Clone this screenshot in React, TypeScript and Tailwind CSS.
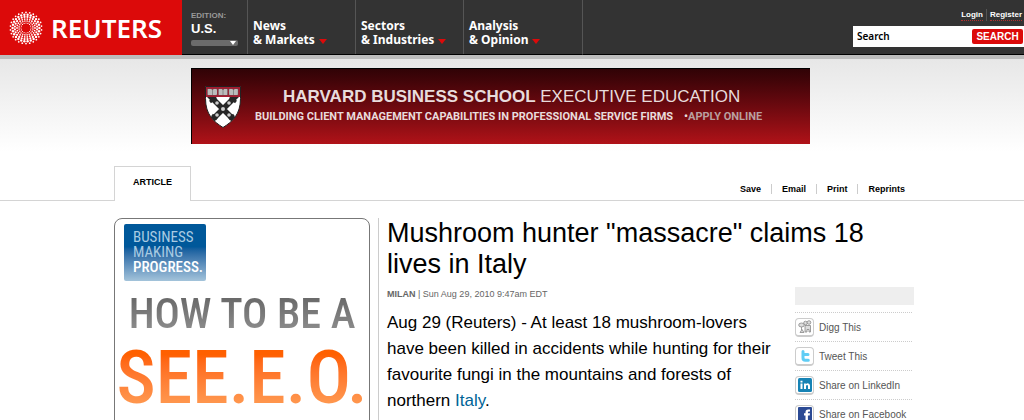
import { Fragment } from 'react';
import type { ReactNode } from 'react';

const NAV_ITEMS = [
  { top: 'News', bottom: '& Markets', width: 'w-[108px]' },
  { top: 'Sectors', bottom: '& Industries', width: 'w-[108px]' },
  { top: 'Analysis', bottom: '& Opinion', width: 'w-[119px]' },
];

const TOOLS = ['Save', 'Email', 'Print', 'Reprints'];

// Rings of the logo: radius, dot size, dot count
const RINGS = [
  [5, 0.6, 16],
  [7, 0.8, 20],
  [9, 0.9, 22],
  [11.2, 1.1, 24],
  [13.4, 1.2, 26],
  [15.6, 0.9, 26],
];

function ReutersMark() {
  return (
    <svg viewBox="-17 -17 34 34" className="size-[34px] shrink-0" fill="white" aria-hidden="true">
      {RINGS.map(([radius, size, count], ring) =>
        Array.from({ length: count }, (_, i) => {
          const angle = ((i + (ring % 2) / 2) / count) * Math.PI * 2;
          return <circle key={`${ring}-${i}`} cx={Math.cos(angle) * radius} cy={Math.sin(angle) * radius} r={size} />;
        }),
      )}
    </svg>
  );
}

function Header() {
  return (
    <header className="flex h-[59px] border-b-4 border-[#bdbdbd] bg-[#333] text-white">
      <a href="#home" className="flex w-[182px] shrink-0 items-center gap-2 bg-[#dc0a0a] pl-[9px]">
        <ReutersMark />
        <span className="font-['Noto_Sans','Open_Sans',sans-serif] text-[26px] leading-8 font-semibold">REUTERS</span>
      </a>
      <div className="w-[65px] shrink-0 border-b border-black pt-[11px] pl-[9px]">
        <div className="text-[8px] leading-[10px] font-bold text-[#999]">EDITION:</div>
        <div className="text-[13px] leading-4 font-bold">U.S.</div>
        <button type="button" aria-label="Change edition" className="mt-[3px] flex h-[6px] w-[47px] items-center justify-end rounded-xs bg-[#6b6b6b] pr-[2px]">
          <svg viewBox="0 0 6 4" className="h-1 w-[6px]" fill="white"><path d="M0 0h6L3 4z" /></svg>
        </button>
      </div>
      <nav className="flex shrink-0 border-r border-b border-r-[#555] border-b-black font-['Noto_Sans','Open_Sans',sans-serif] text-xs font-bold">
        {NAV_ITEMS.map((item) => (
          <a key={item.top} href="#section" className={`${item.width} border-l border-[#555] pt-[19px] pl-[5px] leading-[14px]`}>
            <span className="block">{item.top}</span>
            <span className="flex items-center gap-1 whitespace-nowrap">
              {item.bottom}
              <svg viewBox="0 0 8 5" className="mt-[2px] h-[5px] w-2" fill="#dc0a0a"><path d="M0 0h8L4 5z" /></svg>
            </span>
          </a>
        ))}
      </nav>
      <div className="flex flex-1 flex-col items-end border-b border-black pt-[9px]">
        <div className="flex pr-[2px] text-[8px] leading-[11px] font-bold">
          <a href="#login" className="border-b border-dotted border-[#b03030]">Login</a>
          <span className="mx-[3px] border-l border-[#555]" />
          <a href="#register" className="border-b border-dotted border-[#b03030]">Register</a>
        </div>
        <form className="mt-[5px] flex h-[21px] w-[171px] items-center bg-white pr-px">
          <input aria-label="Search" defaultValue="Search" className="w-0 flex-1 pl-1 font-['Noto_Sans','Open_Sans',sans-serif] text-[10px] font-semibold text-black outline-none" />
          <button type="button" className="h-[15px] w-[51px] rounded-xs bg-[#dc0a0a] text-[10px] leading-[15px] font-bold">SEARCH</button>
        </form>
      </div>
    </header>
  );
}

function Shield() {
  return (
    <svg viewBox="0 0 36 42" className="h-[42px] w-9 shrink-0" aria-hidden="true">
      <clipPath id="shield">
        <path d="M.5.5h35v12c0 16-8 23-17.500 29C8.500 35.500.5 28.500.5 12.500z" />
      </clipPath>
      <g clipPath="url(#shield)">
        <path d="M0 0h36v42H0z" fill="#fff" />
        <path d="M4 9l28 28M32 9L4 37" stroke="#262626" strokeWidth="5.500" />
        <path d="M5 16l6-5M31 16l-6-5M7 29l5 4M29 29l-5 4" stroke="#262626" strokeWidth="3" />
        <path d="M0 0h36v11H0z" fill="#a51c30" />
      </g>
      <g fill="#ddd" stroke="#555" strokeWidth=".5">
        <path d="M2.500 3h4l1 1 1-1h3.500v6H2.500zM13.500 3h3.500l1 1 1-1h3.500v6h-9zM24 3h3.500l1 1 1-1H33v6h-9z" />
        <path d="M3 5h8M3 7h8M14 5h8M14 7h8M24.500 5h8M24.500 7h8M7.500 4v5M18 4v5M28.500 4v5" />
      </g>
      <g fill="#ccc">
        <circle cx="18" cy="23" r="2" />
        <circle cx="12" cy="17" r="1.800" />
        <circle cx="24" cy="17" r="1.800" />
        <circle cx="12" cy="29" r="1.800" />
        <circle cx="24" cy="29" r="1.800" />
      </g>
      <path d="M.5.5h35v12c0 16-8 23-17.500 29C8.500 35.500.5 28.500.5 12.500z" fill="none" stroke="#222" />
    </svg>
  );
}

function Banner() {
  return (
    <a href="#harvard" className="flex h-[76px] w-full max-w-[619px] border-t border-l border-black bg-linear-to-b from-[#300306] to-[#b01218] pt-[17px] pl-[13px] whitespace-nowrap text-[#e8dcdc]">
      <Shield />
      <div className="flex flex-col pl-[14px]">
        <span className="pl-7 text-[17px] leading-[22px]">
          <b className="font-bold">HARVARD BUSINESS SCHOOL</b> EXECUTIVE EDUCATION
        </span>
        <span className="flex items-center gap-[11px] font-['Roboto','Liberation_Sans',sans-serif] text-[11px] leading-[18px] font-bold">
          BUILDING CLIENT MANAGEMENT CAPABILITIES IN PROFESSIONAL SERVICE FIRMS
          <span className="text-[#b9a0a0]"><span className="text-[#e8dcdc]">•</span>APPLY ONLINE</span>
        </span>
      </div>
    </a>
  );
}

function Ad() {
  return (
    <aside className="h-[260px] w-[256px] shrink-0 overflow-hidden rounded-t-lg border border-[#777] font-['Roboto_Condensed','Liberation_Sans_Narrow','DejaVu_Sans_Condensed',sans-serif] whitespace-nowrap">
      <div className="mt-[5px] ml-[9px] h-[57px] w-[82px] rounded-xs bg-linear-to-b from-[#00589a] from-40% to-[#a3c3da] pt-[6px] pl-[9px] text-[15px] leading-[15px] text-[#a9cbe2]">
        <div>BUSINESS</div>
        <div>MAKING</div>
        <div className="font-medium text-white">PROGRESS.</div>
      </div>
      <div className="mt-2 bg-linear-to-b from-[#606060] to-[#969696] bg-clip-text text-center text-[42px] leading-[50px] font-medium text-transparent">HOW TO BE A</div>
      <div className="bg-linear-to-b from-[#ff6000] from-20% to-[#ff954c] to-80% bg-clip-text text-center text-[74px] leading-[78px] font-medium text-transparent">SEE.E.O.</div>
    </aside>
  );
}

function DiggIcon() {
  return (
    <svg viewBox="0 0 14 14" className="size-[14px]" fill="#ddd" stroke="#888" strokeWidth=".8">
      <ellipse cx="3.500" cy="5" rx="2.800" ry="2" />
      <path d="M3.500 7v3M2 12.500l2-3 2 3zM7 5.500h5.500V12H11V9.500H9V12H7z" />
      <circle cx="7.500" cy="3" r="1.800" />
      <circle cx="11" cy="2.500" r="1.800" />
    </svg>
  );
}

function TwitterIcon() {
  return (
    <svg viewBox="0 0 14 14" className="size-[14px]" fill="none" stroke="#5fcdf5" strokeWidth="3" strokeLinecap="round" strokeLinejoin="round">
      <path d="M5 2.500v6.500q0 2.300 2.300 2.300h3M5 5.500h5" />
    </svg>
  );
}

function LinkedInIcon() {
  return (
    <svg viewBox="0 0 14 14" className="size-[14px]">
      <rect width="14" height="14" rx="1.500" fill="#1683b5" />
      <path d="M2.500 5.500h2V11h-2zM2.500 2.700h2v1.800h-2zM6 5.500h1.900v.8q.6-1 1.900-1 2.200 0 2.200 2.500V11h-2V8q0-1.100-.9-1.100T8 8v3H6z" fill="#fff" />
    </svg>
  );
}

function FacebookIcon() {
  return (
    <svg viewBox="0 0 14 14" className="size-[14px]">
      <rect width="14" height="14" rx="1" fill="#2b4a94" />
      <path d="M7.500 14V8.500H6V6.300h1.500V5q0-2.600 2.700-2.600H12v2.200h-1.200q-.9 0-.9.900v.8H12l-.3 2.200H9.900V14z" fill="#fff" />
    </svg>
  );
}

const SHARES: { label: string; icon: ReactNode }[] = [
  { label: 'Digg This', icon: <DiggIcon /> },
  { label: 'Tweet This', icon: <TwitterIcon /> },
  { label: 'Share on LinkedIn', icon: <LinkedInIcon /> },
  { label: 'Share on Facebook', icon: <FacebookIcon /> },
];

function Article() {
  return (
    <article className="ml-2 min-w-0 flex-1 border-l border-[#ccc] pl-2 text-black">
      <h1 className="max-w-[500px] text-[27px] leading-[31px]">Mushroom hunter "massacre" claims 18 lives in Italy</h1>
      <div className="flex">
        <div className="flex-1">
          <p className="mt-2 text-[9px] leading-3 text-[#666]"><b>MILAN</b> | Sun Aug 29, 2010 9:47am EDT</p>
          <p className="mt-[10px] max-w-[390px] text-[17px] leading-[26px]">
            Aug 29 (Reuters) - At least 18 mushroom-lovers have been killed in accidents while hunting for their favourite fungi in the mountains and forests of northern <a href="#italy" className="text-[#006497]">Italy</a>.
          </p>
        </div>
        <div className="mt-[7px] w-[119px] shrink-0">
          <div className="mb-[7px] h-[18px] bg-[#eee]" />
          <ul className="mr-[2px]">
            {SHARES.map((share) => (
              <li key={share.label} className="h-[29px] border-t border-dotted border-[#ccc] pt-[5px]">
                <a href="#share" className="flex items-center gap-[5px] text-[10px] whitespace-nowrap text-[#555]">
                  <span className="flex size-[19px] shrink-0 items-center justify-center rounded-sm border border-b-2 border-[#ccc] bg-white">{share.icon}</span>
                  {share.label}
                </a>
              </li>
            ))}
          </ul>
        </div>
      </div>
    </article>
  );
}

export default function App() {
  return (
    <div className="h-screen overflow-hidden bg-white font-['Liberation_Sans',Arial,sans-serif]">
      <Header />
      <div className="bg-linear-to-b from-[#e7e7e7] to-white pt-[9px] pb-2 pl-[191px]">
        <Banner />
      </div>
      <div className="mt-[14px] flex items-end">
        <div className="w-[114px] shrink-0 border-b border-[#d4d4d4]" />
        <div className="h-[35px] w-[77px] shrink-0 border border-b-0 border-[#d4d4d4] text-center text-[9px] leading-[30px] font-bold">ARTICLE</div>
        <div className="flex-1 border-b border-[#d4d4d4] pb-[5px]">
          <div className="flex max-w-[714px] items-center justify-end text-[9px] leading-[12px] font-bold">
            {TOOLS.map((tool, i) => (
              <Fragment key={tool}>
                {i > 0 && <span className="mx-[10px] h-[10px] border-l border-[#ccc]" />}
                <a href="#tool">{tool}</a>
              </Fragment>
            ))}
          </div>
        </div>
      </div>
      <main className="mt-[17px] flex w-full max-w-[914px] pl-[114px]">
        <Ad />
        <Article />
      </main>
    </div>
  );
}
